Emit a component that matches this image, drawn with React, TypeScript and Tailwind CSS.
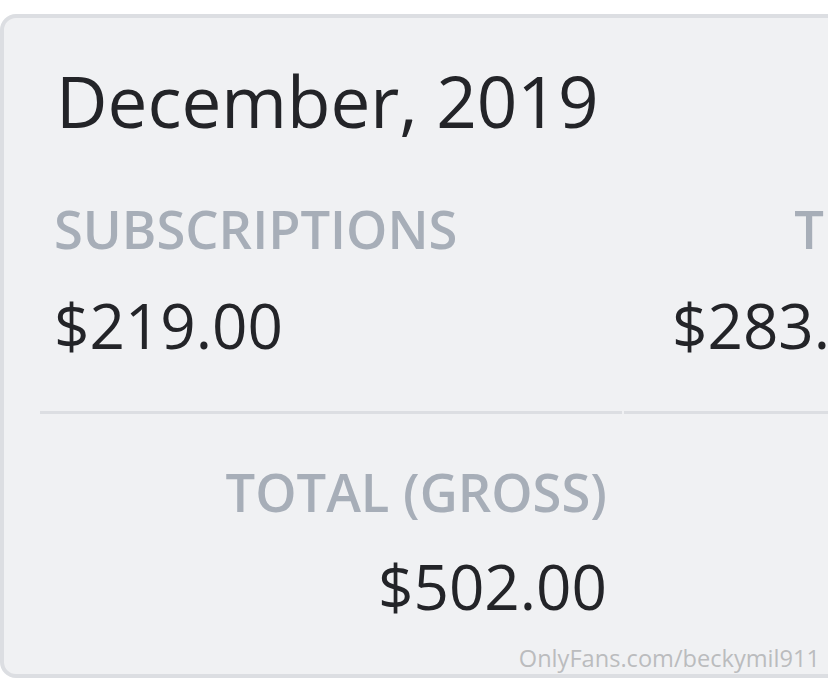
export default function App() {
  return (
    <div
      className="relative w-[828px] h-[681px] overflow-hidden bg-white pt-[14px]"
      style={{ fontFamily: '"Open Sans", "Liberation Sans", sans-serif' }}
    >
      {/* statement card, cropped on the right */}
      <div className="w-[1240px] h-[664px] rounded-[16px] border-4 border-[#dcdee2] bg-[#f0f1f3] pt-[47px]">
        <h1 className="pl-[52px] text-[71px] leading-none font-normal text-[#232428]">
          December, 2019
        </h1>

        <div className="flex ml-[36px] mt-[67px]">
          <div className="w-[582px] pl-[14px] pr-3 pb-[55px] border-b-[3px] border-[#dcdee2]">
            <p className="text-[52.5px] leading-none font-semibold text-[#a7aeb8]">SUBSCRIPTIONS</p>
            <p className="mt-[38px] text-[62px] leading-none text-[#232428]">$219.00</p>
          </div>
          <div className="ml-[2px] w-[582px] pr-[305px] text-right pb-[55px] border-b-[3px] border-[#dcdee2]">
            <p className="text-[52.5px] leading-none font-semibold text-[#a7aeb8]">TIPS</p>
            <p className="mt-[38px] text-[62px] leading-none text-[#232428]">$283.00</p>
          </div>
        </div>

        <div className="w-[606px] text-right mt-[52px] pr-[3px]">
          <p className="text-[52.5px] leading-none font-semibold text-[#a7aeb8]">TOTAL (GROSS)</p>
          <p className="mt-[37px] text-[62px] leading-none text-[#232428]">$502.00</p>
        </div>
      </div>

      <span className="absolute right-[8px] top-[647px] text-[23.6px] leading-none text-[#bbbcbe]">
        OnlyFans.com/beckymil911
      </span>
    </div>
  );
}
